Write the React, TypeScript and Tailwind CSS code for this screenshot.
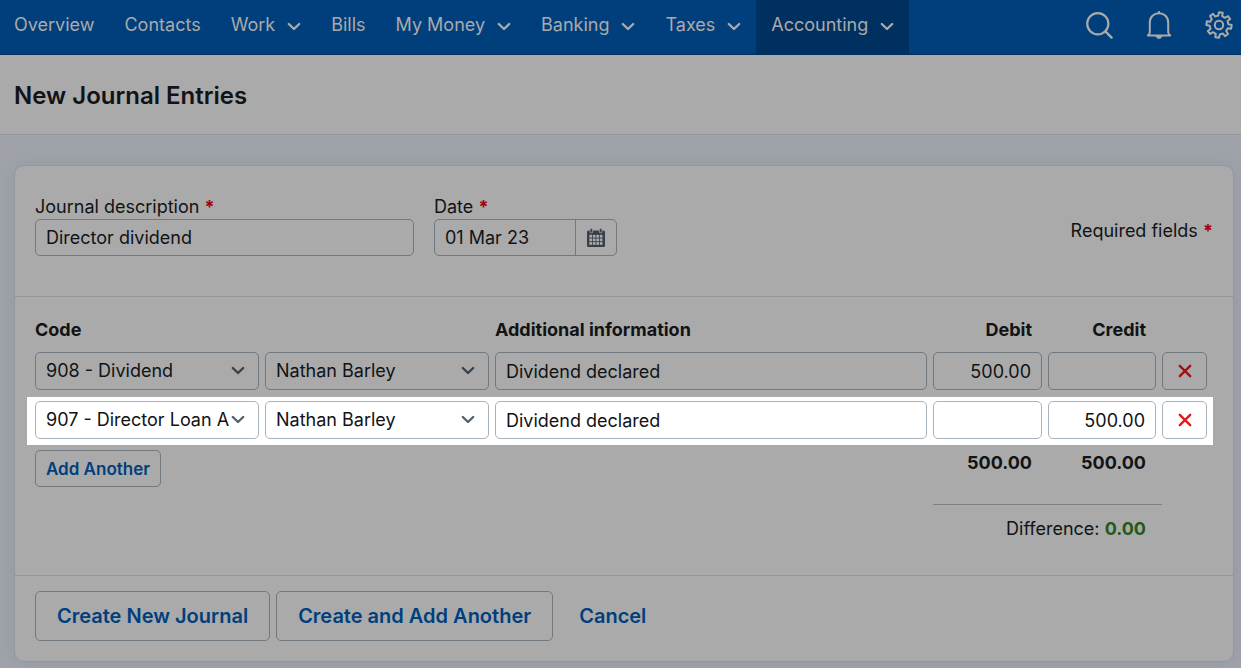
import { useState } from "react";
import type { ReactNode } from "react";

const NAV = [
  { label: "Overview", menu: false, active: false },
  { label: "Contacts", menu: false, active: false },
  { label: "Work", menu: true, active: false },
  { label: "Bills", menu: false, active: false },
  { label: "My Money", menu: true, active: false },
  { label: "Banking", menu: true, active: false },
  { label: "Taxes", menu: true, active: false },
  { label: "Accounting", menu: true, active: true },
];

const ROWS = [
  { code: "908 - Dividend", person: "Nathan Barley", info: "Dividend declared", debit: "500.00", credit: "", lit: false },
  { code: "907 - Director Loan A", person: "Nathan Barley", info: "Dividend declared", debit: "", credit: "500.00", lit: true },
];

function Chevron({ className }: { className: string }) {
  return (
    <svg viewBox="0 0 14 10" className={className} fill="none" stroke="currentColor" strokeWidth="2.4" strokeLinecap="round" strokeLinejoin="round" aria-hidden="true">
      <path d="M1.800 2l5.200 5L12.200 2" />
    </svg>
  );
}

function SearchIcon() {
  return (
    <svg viewBox="0 0 28 28" className="size-7" fill="none" stroke="currentColor" strokeWidth="2.2" strokeLinecap="round" aria-hidden="true">
      <circle cx="12.8" cy="12.8" r="10.6" />
      <path d="M20.400 20.400l6.2 6.2" strokeWidth="2.4" />
    </svg>
  );
}

function BellIcon() {
  return (
    <svg viewBox="0 0 28 28" className="size-7" fill="none" stroke="currentColor" strokeWidth="2" strokeLinejoin="round" strokeLinecap="round" aria-hidden="true">
      <path d="M2.8 24.4h22.4c-1.5-.7-2-1.7-2-3.400V11.500C23.200 5.800 19 2.200 14 2.200S4.800 5.800 4.800 11.500V21c0 1.700-.5 2.700-2 3.400z" />
      <path d="M14 .9v1" />
      <path d="M11 25c.3 1.600 1.400 2.300 3 2.300s2.700-.7 3-2.300z" fill="currentColor" strokeWidth="1" />
    </svg>
  );
}

function gearPath() {
  const teeth = 8;
  const pts: string[] = [];
  for (let i = 0; i < teeth; i++) {
    const base = (i * 360) / teeth + 9;
    const spots: [number, number][] = [
      [-14, 9.400],
      [-9, 12.700],
      [8, 12.700],
      [11, 9.400],
    ];
    for (const [offset, radius] of spots) {
      const a = ((base + offset - 90) * Math.PI) / 180;
      pts.push(`${(14 + radius * Math.cos(a)).toFixed(2)} ${(14 + radius * Math.sin(a)).toFixed(2)}`);
    }
  }
  return `M${pts.join("L")}Z`;
}

function GearIcon() {
  return (
    <svg viewBox="0 0 28 28" className="size-7" fill="none" stroke="currentColor" strokeWidth="2" strokeLinejoin="round" aria-hidden="true">
      <path d={gearPath()} />
      <circle cx="14" cy="14" r="4.200" />
    </svg>
  );
}

function CalendarIcon() {
  return (
    <svg viewBox="0 0 18 19" className="h-[19px] w-[18px]" aria-hidden="true">
      <path d="M1.500 2.500h15a1.500 1.500 0 0 1 1.500 1.500v13.500a1.500 1.500 0 0 1-1.500 1.500h-15A1.500 1.500 0 0 1 0 17.500V4a1.500 1.500 0 0 1 1.500-1.500z" fill="#373f4a" />
      <g fill="#373f4a" stroke="#aaaaaa" strokeWidth=".8">
        <rect x="3" y=".4" width="2.600" height="4.600" rx="1.200" />
        <rect x="12.400" y=".4" width="2.600" height="4.600" rx="1.200" />
      </g>
      <g fill="#aaaaaa">
        {[6.900, 10.500, 14.100].map((y) =>
          [2.300, 5.800, 9.300, 12.800].map((x) => <rect key={`${x}-${y}`} x={x} y={y} width="2.700" height="2.700" />)
        )}
      </g>
    </svg>
  );
}

function CrossIcon() {
  return (
    <svg viewBox="0 0 14 14" className="size-3.5" fill="none" stroke="currentColor" strokeWidth="2.400" strokeLinecap="round" aria-hidden="true">
      <path d="M1.800 1.800l10.400 10.400M12.200 1.800L1.800 12.200" />
    </svg>
  );
}

function Star() {
  return <span className="font-bold text-[#a00010]">*</span>;
}

function Select({ label, value, tone }: { label: string; value: string; tone: string }) {
  return (
    <div className="relative">
      <select aria-label={label} defaultValue={value} className={`h-[38px] w-full appearance-none rounded-[5px] border pr-7 pl-2.5 ${tone}`}>
        <option>{value}</option>
      </select>
      <Chevron className={"pointer-events-none absolute top-3.5 right-3.5 h-2.5 w-3.5 " + (tone.includes("white") ? "text-[#52616e]" : "text-[#37414a]")} />
    </div>
  );
}

function BigButton({ children }: { children: ReactNode }) {
  return (
    <button type="button" className="h-[50px] rounded-[5px] border border-[#707880] px-[21px] text-xl font-semibold text-[#003f7d]">
      {children}
    </button>
  );
}

export default function App() {
  const [description, setDescription] = useState("Director dividend");
  const [date, setDate] = useState("01 Mar 23");

  return (
    <div className="flex min-h-screen flex-col bg-[#9fa2a9] font-[Inter,'Liberation_Sans',sans-serif] text-lg leading-6 text-[#111315]">
      <header className="flex h-[55px] items-stretch justify-between border-b border-[#00305f] bg-[#003f7c] text-[#aaaaaa]">
        <nav className="flex" aria-label="Main">
          {NAV.map((item) => (
            <a key={item.label} href="#" className={"flex items-center gap-3 px-[15px] pb-1 whitespace-nowrap first:pl-3.5 " + (item.active ? "bg-[#00305f]" : "")}>
              {item.label}
              {item.menu && <Chevron className="mt-1 h-2.5 w-3.5" />}
            </a>
          ))}
        </nav>
        <div className="flex items-center gap-8 pr-2 pb-1">
          <button type="button" aria-label="Search"><SearchIcon /></button>
          <button type="button" aria-label="Notifications"><BellIcon /></button>
          <button type="button" aria-label="Settings"><GearIcon /></button>
        </div>
      </header>

      <div className="flex h-20 items-center border-b border-[#929599] bg-[#aaaaaa] px-3.5 pt-0.5">
        <h1 className="text-2xl font-semibold">New Journal Entries</h1>
      </div>

      <main className="pt-[30px] pr-[7px] pb-[7px] pl-3.5">
        <form className="rounded-[10px] border border-[#94979c] bg-[#aaaaaa] shadow-[0_0_16px_rgba(110,120,150,0.2)]">
          <section className="flex h-[131px] items-start border-b border-[#949698] px-5 pt-[29px]">
            <div className="flex w-[379px] flex-col">
              <label htmlFor="description">Journal description <Star /></label>
              <input id="description" value={description} onChange={(e) => setDescription(e.target.value)} className="h-[37px] rounded-[5px] border border-[#707880] px-2.5" />
            </div>
            <div className="ml-5 flex w-[183px] flex-col">
              <label htmlFor="date">Date <Star /></label>
              <div className="flex h-[37px] rounded-[5px] border border-[#707880]">
                <input id="date" value={date} onChange={(e) => setDate(e.target.value)} className="w-full min-w-0 px-2.5" />
                <button type="button" aria-label="Choose date" className="flex w-[41px] shrink-0 items-center justify-center border-l border-[#707880]">
                  <CalendarIcon />
                </button>
              </div>
            </div>
            <p className="mt-6 ml-auto">Required fields <Star /></p>
          </section>

          <section className="border-b border-[#949698] pr-5 pl-3">
            <table className="w-full table-fixed border-collapse">
              <colgroup>
                <col className="w-[238px]" />
                <col className="w-[230px]" />
                <col />
                <col className="w-[115px]" />
                <col className="w-[114px]" />
                <col className="w-[51px]" />
              </colgroup>
              <thead>
                <tr className="h-[51px] text-left [&>th]:pt-3.5">
                  <th scope="col" colSpan={2} className="pl-2 font-bold">Code</th>
                  <th scope="col" className="font-bold">Additional information</th>
                  <th scope="col" className="pr-4 text-right font-bold">Debit</th>
                  <th scope="col" className="pr-4 text-right font-bold">Credit</th>
                  <td />
                </tr>
              </thead>
              <tbody>
                {ROWS.map((row) => {
                  const tone = row.lit ? "border-[#a8b2bb] bg-white" : "border-[#707880] bg-[#aaaaaa]";
                  const field = "h-[38px] w-full rounded-[5px] border px-2.5 " + tone;
                  return (
                    <tr key={row.code} className={row.lit ? "h-12 bg-white align-top [&>td]:pt-1 [&>td]:pr-1.5" : "h-[49px] align-top [&>td]:pt-1 [&>td]:pr-1.5"}>
                      <td className="pl-2"><Select label="Code" value={row.code} tone={tone} /></td>
                      <td><Select label="Person" value={row.person} tone={tone} /></td>
                      <td><input aria-label="Additional information" defaultValue={row.info} className={field} /></td>
                      <td><input aria-label="Debit" defaultValue={row.debit} className={field + " text-right"} /></td>
                      <td><input aria-label="Credit" defaultValue={row.credit} className={field + " text-right"} /></td>
                      <td>
                        <button type="button" aria-label="Remove row" className={"flex h-[38px] w-full items-center justify-center rounded-[5px] border " + tone + (row.lit ? " text-[#e8181c]" : " text-[#a01216]")}>
                          <CrossIcon />
                        </button>
                      </td>
                    </tr>
                  );
                })}
              </tbody>
              <tfoot>
                <tr className="h-[59px] align-top font-bold">
                  <td colSpan={3} className="pt-[5px] pl-2">
                    <button type="button" className="h-[37px] rounded-[5px] border border-[#707880] px-2.5 text-[17px] font-semibold text-[#003f7d]">Add Another</button>
                  </td>
                  <td className="pt-1.5 pr-4 text-right">500.00</td>
                  <td className="pt-1.5 pr-4 text-right">500.00</td>
                  <td />
                </tr>
                <tr className="h-[71px] align-top">
                  <td colSpan={3} />
                  <td colSpan={2} className="border-t border-[#7d8083] pt-3 pr-4 text-right">
                    Difference: <span className="font-bold text-[#25581a]">0.00</span>
                  </td>
                  <td />
                </tr>
              </tfoot>
            </table>
          </section>

          <section className="flex gap-1.5 px-5 pt-[15px] pb-5">
            <BigButton>Create New Journal</BigButton>
            <BigButton>Create and Add Another</BigButton>
            <a href="#" className="flex h-[50px] items-center px-5 text-xl font-semibold text-[#003f7d]">Cancel</a>
          </section>
        </form>
      </main>
    </div>
  );
}
